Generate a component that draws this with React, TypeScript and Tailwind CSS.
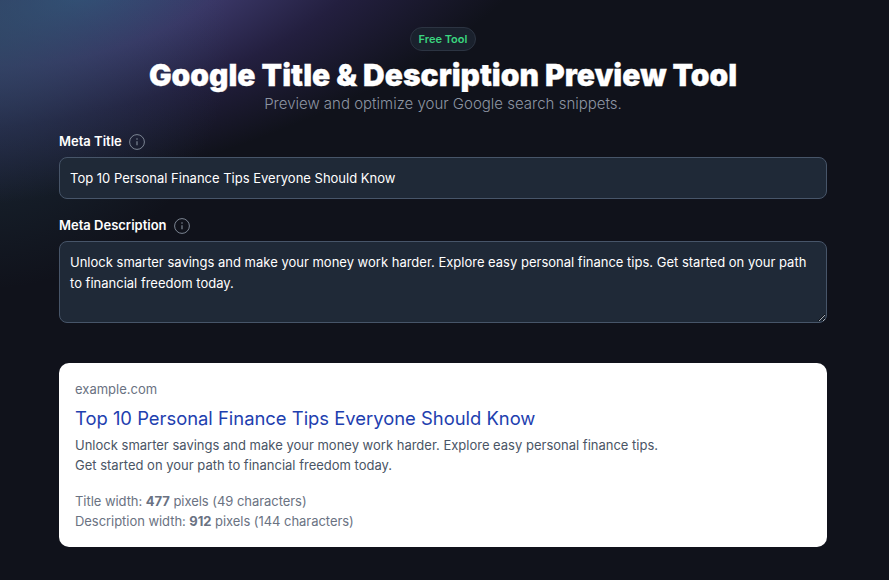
import React from "react";

const title = "Top 10 Personal Finance Tips Everyone Should Know";
const description =
  "Unlock smarter savings and make your money work harder. Explore easy personal finance tips. Get started on your path to financial freedom today.";

const InfoIcon = () => (
  <svg width="16" height="16" viewBox="0 0 16 16" fill="none" className="text-[#7c8593]">
    <circle cx="8" cy="8" r="7.4" stroke="currentColor" strokeWidth="1" />
    <path d="M8 7.2v4" stroke="currentColor" strokeWidth="1.2" />
    <circle cx="8" cy="5" r="0.8" fill="currentColor" />
  </svg>
);

const App = () => {
  return (
    <div className="relative h-[580px] overflow-hidden bg-[#10121b] font-['Inter',sans-serif]">
      <div className="absolute left-[-420px] top-[-405px] h-[800px] w-[1000px] -rotate-[14deg] bg-[radial-gradient(ellipse_500px_190px_at_50%_50%,#35517c_0%,#3a3767_32%,#231f3f_62%,#10121b_100%)]" />
      <div className="absolute left-[-270px] top-[-210px] h-[500px] w-[500px] bg-[radial-gradient(circle_250px_at_50%_50%,#2b4e6290_0%,#2b4e6240_50%,#2b4e6200_100%)]" />
      <div className="relative flex flex-col items-center pr-[3px]">
        <div className="w-[768px]">
          <div className="flex flex-col items-center pt-[27px]">
            <span className="flex h-6 w-[66px] items-center justify-center rounded-full border border-[#2c3442] bg-[#1a212d] text-[11px] font-semibold text-[#3ad67f]">
              Free Tool
            </span>
            <h1 className="mt-[6px] text-[30px] leading-9 font-black whitespace-nowrap text-white [-webkit-text-stroke:0.3px_white]">
              Google Title &amp; Description Preview Tool
            </h1>
            <p className="mt-[1px] text-[15px] leading-5 font-light text-[#8d95a3]">
              Preview and optimize your Google search snippets.
            </p>
          </div>

          <div className="mt-[18px] flex h-5 items-center gap-[7px]">
            <label className="text-[13px] font-semibold text-white">Meta Title</label>
            <InfoIcon />
          </div>
          <input
            readOnly
            value={title}
            className="mt-[5px] block h-[42px] w-full rounded-lg border border-[#475569] bg-[#1f2937] px-[10px] text-[13px] text-white outline-none"
          />

          <div className="mt-[17px] flex h-5 items-center gap-[7px]">
            <label className="text-[13px] font-semibold text-white">Meta Description</label>
            <InfoIcon />
          </div>
          <textarea
            readOnly
            value={description}
            className="mt-[5px] block h-[82px] w-full rounded-lg border border-[#475569] bg-[#1f2937] px-[10px] py-[10px] text-[13px] leading-[21px] text-white outline-none"
          />

          <div className="mt-10 h-[184px] rounded-[10px] bg-white px-4 pt-4">
            <div className="text-[13px] leading-5 text-gray-500">example.com</div>
            <div className="mt-[5px] text-[18.4px] leading-7 text-[#1e40af]">{title}</div>
            <p className="mt-[3px] w-[590px] text-[13px] leading-5 text-gray-600">{description}</p>
            <div className="mt-[16px] text-[13px] leading-5 tracking-[-0.05px] text-gray-500">
              <div>
                Title width: <b className="font-bold">477</b> pixels (49 characters)
              </div>
              <div>
                Description width: <b className="font-bold">912</b> pixels (144 characters)
              </div>
            </div>
          </div>
        </div>
      </div>
    </div>
  );
};

export default App;
